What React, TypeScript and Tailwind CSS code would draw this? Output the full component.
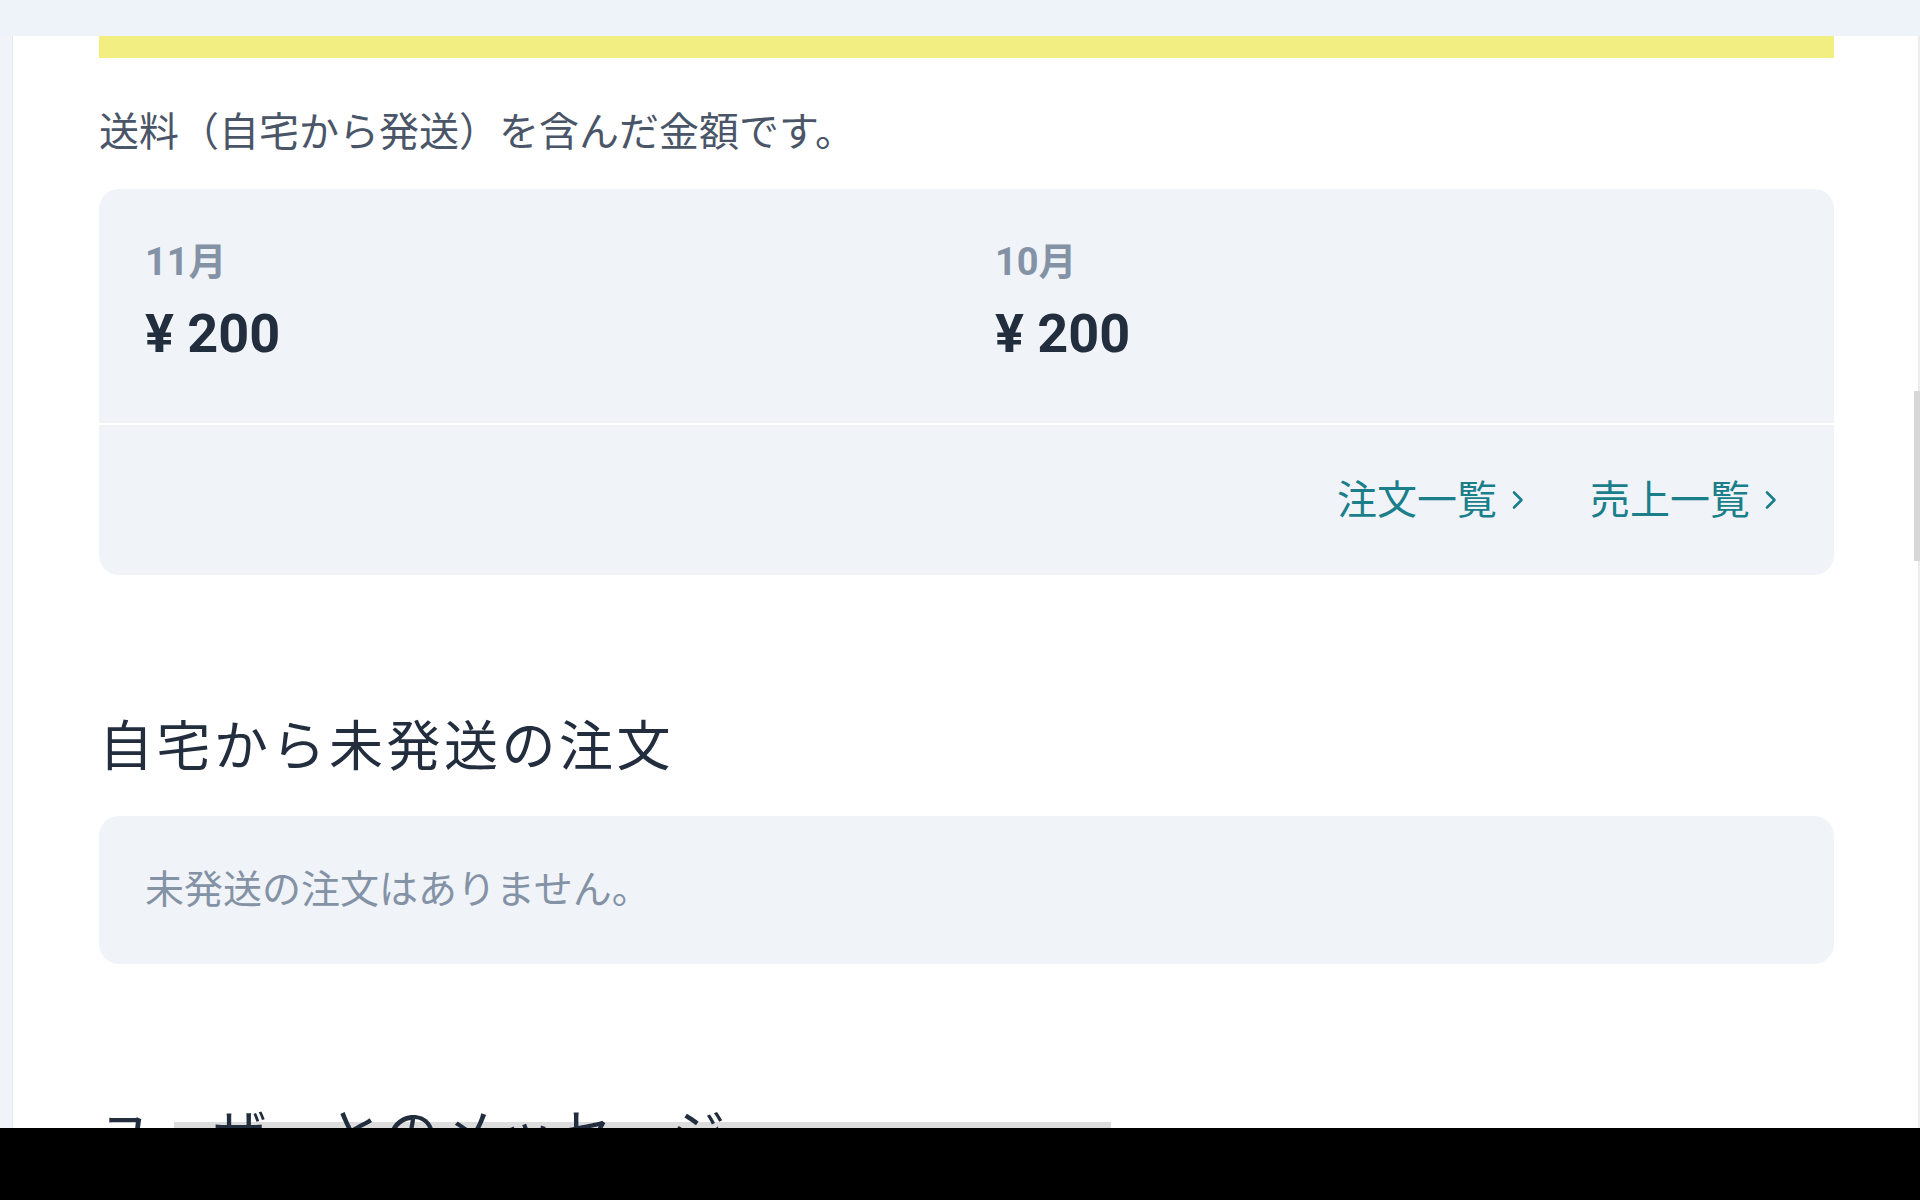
import React from 'react';

const months = [
  { label: '11月', amount: '¥ 200' },
  { label: '10月', amount: '¥ 200' },
];

const links = ['注文一覧', '売上一覧'];

const Chevron = () => (
  <svg width="12" height="20" viewBox="0 0 12 20" fill="none" className="ml-[15px] shrink-0">
    <path d="M2 2.5 L9.5 10 L2 17.5" stroke="#1a7f8b" strokeWidth="2.6" strokeLinecap="round" strokeLinejoin="round" />
  </svg>
);

export default function App() {
  return (
    <div className="relative w-[1920px] h-[1200px] overflow-hidden bg-white font-['Roboto','Noto_Sans_CJK_JP',sans-serif]">
      {/* top band */}
      <div className="h-[36px] bg-[#eef3fa]" />

      <div className="flex h-[1092px]">
        {/* left rail */}
        <div className="w-[13px] shrink-0 bg-[#f0f4f8] border-r border-[#e3e8ee]" />

        {/* main column */}
        <main className="relative flex-1 overflow-hidden pl-[86px] pr-[80px]">
          <div className="h-[22px] bg-[#f2ee82]" />

          <p className="mt-[45px] text-[40px] leading-[60px] text-[#4a5568]">
            送料（自宅から発送）を含んだ金額です。
          </p>

          {/* sales card */}
          <div className="mt-[26px] rounded-[20px] bg-[#f0f4f8] overflow-hidden">
            <div className="grid grid-cols-2 gap-x-[57px] px-[46px] pt-[50px] pb-[57px]">
              {months.map((m) => (
                <div key={m.label} className="flex flex-col">
                  <div className="text-[38px] leading-[46px] font-bold text-[#8492a6]">{m.label}</div>
                  <div className="mt-4 text-[54px] leading-[65px] font-bold text-[#222d3d]">{m.amount}</div>
                </div>
              ))}
            </div>
            <div className="h-[2px] bg-white" />
            <div className="flex h-[150px] items-center justify-end gap-[66px] pr-[57px]">
              {links.map((l) => (
                <a key={l} className="flex items-center text-[40px] leading-[57px] text-[#1a7f8b]">
                  {l}
                  <Chevron />
                </a>
              ))}
            </div>
          </div>

          {/* unshipped orders */}
          <h2 className="mt-[135px] text-[54px] leading-[75px] tracking-[3.5px] text-[#222d3d]">
            自宅から未発送の注文
          </h2>
          <div className="mt-[31px] flex h-[148px] items-center rounded-[20px] bg-[#f0f4f8] px-[46px]">
            <p className="text-[39px] leading-[57px] text-[#8492a6]">未発送の注文はありません。</p>
          </div>

          {/* messages */}
          <h2 className="relative z-10 mt-[135px] text-[54px] leading-[75px] tracking-[3.5px] text-[#222d3d]">
            ユーザーとのメッセージ
          </h2>

          {/* overlay strip at the bottom edge */}
          <div className="absolute bottom-0 left-[161px] z-0 h-[6px] w-[937px] bg-[#dcdcdc]" />
        </main>

        {/* scrollbar */}
        <div className="relative w-[6px] shrink-0 bg-white">
          <div className="absolute right-0 top-0 h-full w-[2px] bg-[#ececec]" />
          <div className="absolute right-0 top-[355px] h-[170px] w-[6px] bg-[#d8d8d8]" />
        </div>
      </div>

      {/* black bottom */}
      <div className="h-[72px] bg-black" />
    </div>
  );
}
